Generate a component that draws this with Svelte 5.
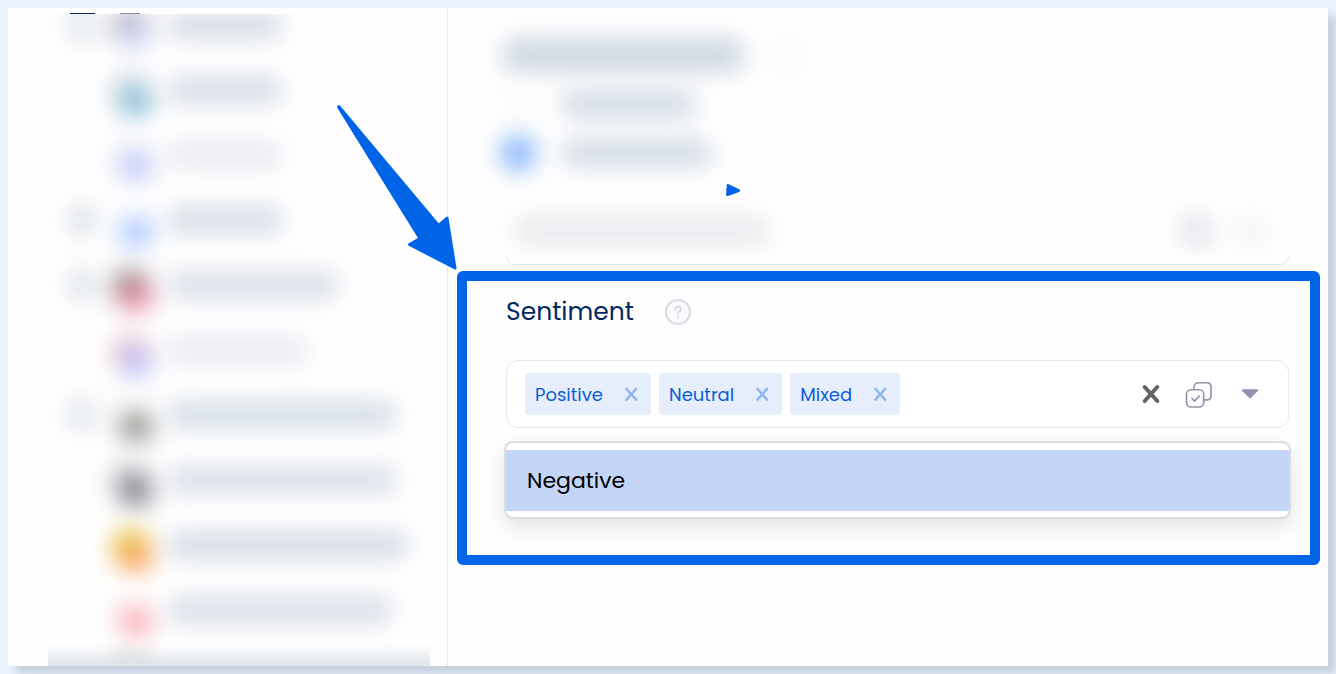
<script>
  const accounts = [
    { box: true, tone: '#a9a5bc', badge: '#d3d9f8', width: 110, ink: '#c9d1df' },
    { box: false, tone: '#ccd4e2', badge: '#7fb8d2', width: 110, ink: '#c9d1df' },
    { box: false, tone: '#edeef6', badge: '#bac4f8', width: 110, ink: '#e0e3eb' },
    { box: true, tone: '#fbfcff', badge: '#9dc0ff', width: 110, ink: '#c9d1df' },
    { box: true, tone: '#8f8886', badge: '#e57f9a', width: 166, ink: '#ccd3e1' },
    { box: false, tone: '#ebc2ca', badge: '#b5b8f4', width: 136, ink: '#e0e4ec' },
    { box: true, tone: '#f4f3f0', badge: '#858380', width: 224, ink: '#c8d2df' },
    { box: false, tone: '#bcbcc2', badge: '#777682', width: 224, ink: '#ccd4e1' },
    { box: false, tone: '#e6c63a', badge: '#f79a50', width: 236, ink: '#c8d1de' },
    { box: false, tone: '#fdf4f4', badge: '#f8a2ab', width: 220, ink: '#ccd4e1' },
    { box: false, tone: '#b3a698', badge: '#d8cfc6', width: 0, ink: '#ccd4e1' }
  ];

  let selected = $state(['Positive', 'Neutral', 'Mixed']);
  let options = $state(['Negative']);

  function remove(name) {
    selected = selected.filter((item) => item !== name);
    options = [...options, name];
  }

  function add(name) {
    options = options.filter((item) => item !== name);
    selected = [...selected, name];
  }

  function clear() {
    options = [...options, ...selected];
    selected = [];
  }

  function selectAll() {
    selected = [...selected, ...options];
    options = [];
  }
</script>

<div class="stage">
  <main class="card">
    <aside class="sidebar" aria-hidden="true">
      <div class="edge-top"><span class="cut-box"></span><span class="cut-avatar"></span></div>
      <div class="accounts">
        <div class="rows">
          {#each accounts as account}
            <div class="row">
              <span class="tick" class:shown={account.box}></span>
              <span class="avatar" style:background={account.tone}>
                <span class="badge" style:background={account.badge}></span>
              </span>
              <span class="bar" style:width="{account.width}px" style:background={account.ink}></span>
            </div>
          {/each}
        </div>
        <div class="shade"></div>
      </div>
    </aside>

    <div class="content">
      <div class="veiled" aria-hidden="true">
        <div class="line"><span class="bar heading-bar"></span><span class="dot help-dot"></span></div>
        <div class="line"><span class="dot"></span><span class="bar first"></span></div>
        <div class="line"><span class="dot on"></span><span class="bar second"></span></div>
        <div class="field"><span class="bar hint"></span><span class="dot tool"></span><span class="dot faint"></span></div>
      </div>
      <div class="field-edge"></div>

      <section class="frame">
        <header>
          <h2 id="sentiment">Sentiment</h2>
          <button aria-label="Help">
            <svg width="28" height="28" viewBox="0 0 28 28" fill="none" stroke="#d8dbe6" stroke-width="2">
              <circle cx="14" cy="14" r="12" fill="#fafbfd" />
              <path d="M11.200 11.700v-.4c0-1.500 1.200-2.500 2.800-2.500s2.800 1 2.800 2.600c0 2-2.800 2.200-2.800 4.300" stroke-linecap="round" />
              <circle cx="14" cy="18.900" r="1.300" fill="#d8dbe6" stroke="none" />
            </svg>
          </button>
        </header>

        <div class="select" role="group" aria-labelledby="sentiment">
          <div class="chips">
            {#each selected as name (name)}
              <span class="chip">
                {name}
                <button aria-label="Remove {name}" onclick={() => remove(name)}>
                  <svg width="14" height="14" viewBox="0 0 14 14" stroke="#8fb4ee" stroke-width="2.600" stroke-linecap="round">
                    <path d="M2.500 2l9.500 10.500M12 2L2.500 12.500" />
                  </svg>
                </button>
              </span>
            {/each}
          </div>
          <button class="clear" aria-label="Clear" onclick={clear}>
            <svg width="20" height="20" viewBox="0 0 20 20" stroke="#636363" stroke-width="4" stroke-linecap="round">
              <path d="M3.700 3l12.600 14M16.300 3L3.700 17" />
            </svg>
          </button>
          <button class="all" aria-label="Select all" onclick={selectAll}>
            <svg width="28" height="28" viewBox="0 0 28 28" fill="none" stroke="#9094ad" stroke-width="1.600" stroke-linecap="round" stroke-linejoin="round">
              <rect x="1.500" y="9.800" width="17.200" height="17.200" rx="4.500" />
              <path d="M9 9.500V7.300c0-2.800 1.700-4.500 4.500-4.500h8.100c2.800 0 4.500 1.700 4.500 4.500v8.100c0 2.800-1.700 4.500-4.500 4.500H19" />
              <path d="M6.800 18.300l2.700 2.800 4.800-5" />
            </svg>
          </button>
          <button aria-label="Open list">
            <svg width="18" height="10" viewBox="0 0 18 10" fill="#9092ad">
              <path d="M1.500.3h15c.8 0 1.100.9.500 1.400l-7.200 7.200c-.5.500-1.100.5-1.600 0L1 1.700C.4 1.200.7.3 1.500.3z" />
            </svg>
          </button>
        </div>

        <ul class="menu">
          {#each options as name (name)}
            <li><button onclick={() => add(name)}>{name}</button></li>
          {/each}
        </ul>

        <svg class="pointer" width="122" height="168" viewBox="0 0 122 168" fill="#0064e6" stroke="#0064e6" stroke-width="3" stroke-linejoin="round" aria-hidden="true">
          <path d="M1.800 2.500L101.500 121.500L110 114L118 164L72.500 140.500L83 134.500L1.800 3.500Z" />
        </svg>
        <svg class="spark" width="18" height="16" viewBox="0 0 18 16" fill="#0064e6" stroke="#0064e6" stroke-width="3" stroke-linejoin="round" aria-hidden="true">
          <path d="M4 3.500L14.500 8.500L3.500 12.500L4 9.500L3.500 7L5 6Z" />
        </svg>
      </section>
    </div>
  </main>
</div>

<style>
  :global(body) {
    background: #e9f3fe;
    font-family: Poppins, Inter, sans-serif;
  }

  .stage {
    box-sizing: border-box;
    min-height: 100vh;
    padding: 8px;
    display: grid;
    overflow: hidden;
  }

  .card {
    display: grid;
    grid-template-columns: 1fr 2fr;
    background: #fefefe;
    box-shadow: 8px 8px 8px #c7d0dc;
  }

  button {
    display: flex;
    padding: 0;
    border: 0;
    background: none;
    font: inherit;
    color: inherit;
    cursor: pointer;
  }

  .sidebar {
    display: flex;
    flex-direction: column;
    padding: 0 17px 0 40px;
    border-right: 1px solid #e6e8ec;
  }

  .edge-top {
    display: flex;
    align-items: flex-end;
    gap: 25px;
    height: 6px;
    padding-left: 22px;
  }

  .cut-box,
  .cut-avatar {
    width: 25px;
    height: 1px;
    background: #0b2a52;
  }

  .cut-avatar {
    width: 20px;
    background: #8f8f9c;
  }

  .accounts {
    flex: 1;
    display: grid;
    grid-template-rows: 100%;
    contain: size;
    overflow: hidden;
  }

  .rows,
  .shade {
    grid-area: 1 / 1;
  }

  .rows {
    margin-top: -22px;
  }

  .row {
    display: flex;
    align-items: center;
    height: 65px;
    padding-left: 22px;
    filter: blur(12px);
  }

  .tick {
    width: 24px;
    height: 28px;
    margin-right: 18px;
  }

  .tick.shown {
    background: #d9dfe7;
  }

  .avatar {
    display: flex;
    align-items: flex-end;
    justify-content: flex-end;
    width: 38px;
    height: 38px;
    margin: 6px 20px 0 0;
    border-radius: 50%;
  }

  .badge {
    width: 32px;
    height: 28px;
    margin: 0 -2px -4px 0;
    border-radius: 50%;
  }

  .bar {
    height: 24px;
    opacity: 0.85;
  }

  .shade {
    position: relative;
    align-self: end;
    height: 22px;
    background: linear-gradient(#e0e5eb00, #e0e5eb);
  }

  .veiled {
    padding: 22px 39px 0 54px;
    height: 226px;
    overflow: hidden;
  }

  .line,
  .field {
    display: flex;
    align-items: center;
    height: 49px;
    filter: blur(12px);
  }

  .dot {
    width: 32px;
    height: 34px;
    border-radius: 50%;
    background: #fafafa;
  }

  .on {
    background: #75abf8;
  }

  .line .bar {
    margin-left: 30px;
    background: #c4cfde;
  }

  .line .heading-bar {
    width: 238px;
    height: 30px;
    margin: 0 30px 0 2px;
    background: #c0cbda;
  }

  .help-dot {
    background: #f6f7f9;
  }

  .first {
    width: 130px;
  }

  .second {
    width: 146px;
  }

  .field {
    height: 64px;
    margin-top: 22px;
    padding: 0 22px 0 14px;
  }

  .hint {
    width: 252px;
    margin-right: auto;
    background: #e2e2e8;
  }

  .tool {
    margin-right: 22px;
    background: #e0e2e9;
  }

  .faint {
    background: #f2f2f5;
  }

  .field-edge {
    height: 8px;
    margin: 0 39px 6px 58px;
    border: 1px solid #e4e5f0;
    border-top: 0;
    border-radius: 0 0 12px 12px;
  }

  .frame {
    position: relative;
    margin: 0 8px 0 9px;
    padding: 14px 21px 36px 39px;
    border: 10px solid #0064e6;
    border-radius: 6px;
  }

  header {
    display: flex;
    align-items: center;
    gap: 30px;
    height: 34px;
    margin-bottom: 31px;
  }

  h2 {
    margin: 0;
    font-size: 25px;
    font-weight: 400;
    line-height: 32px;
    color: #00285f;
  }

  .select {
    display: flex;
    align-items: center;
    box-sizing: border-box;
    min-height: 68px;
    padding: 12px 29px 12px 18px;
    border: 1px solid #e8e9ec;
    border-radius: 12px;
    background: #fff;
  }

  .chips {
    display: flex;
    flex-wrap: wrap;
    gap: 8px;
    margin-right: auto;
  }

  .chip {
    display: flex;
    align-items: center;
    gap: 21px;
    height: 42px;
    padding: 0 13px 0 10px;
    border-radius: 4px;
    background: #e6eefb;
    color: #0b5cd7;
    font-size: 18px;
  }

  .clear {
    margin-right: 24px;
  }

  .all {
    margin-right: 28px;
  }

  .menu {
    margin: 13px -2px 0;
    padding: 7px 0 6px;
    list-style: none;
    border: 2px solid #dcdcdd;
    border-radius: 9px;
    background: #fff;
    box-shadow: 0 8px 20px #0000001c;
  }

  .menu button {
    width: 100%;
    padding: 0 21px;
    background: #c4d6f8;
    color: #000;
    font-size: 22px;
    line-height: 61px;
  }

  .pointer {
    position: absolute;
    top: -177px;
    left: -130px;
  }

  .spark {
    position: absolute;
    top: -99px;
    left: 257px;
  }
</style>
